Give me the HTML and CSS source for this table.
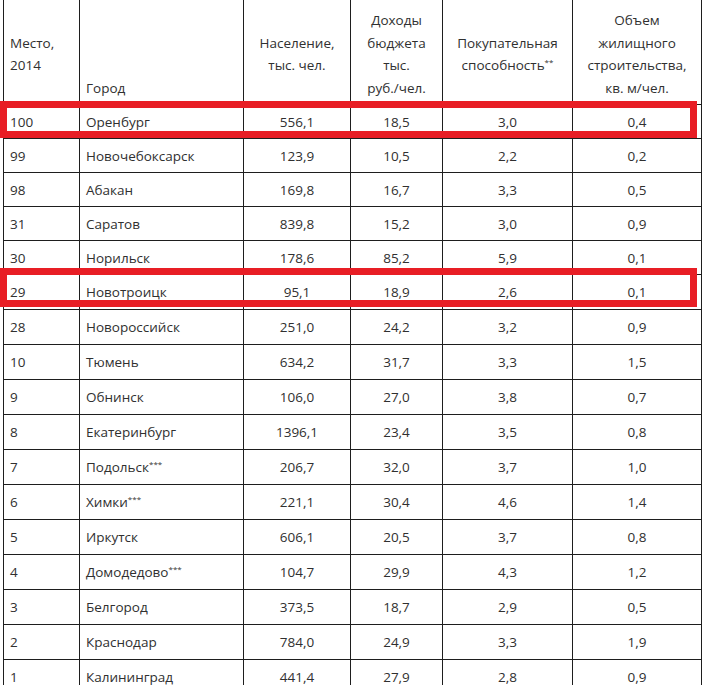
FILE: index.html
```html
<!DOCTYPE html>
<html lang="ru">
<head>
<meta charset="utf-8">
<title>Рейтинг городов</title>
<link rel="stylesheet" href="styles.css">
</head>
<body>
<div class="wrap">
  <table class="rating">
    <colgroup>
      <col class="c1"><col class="c2"><col class="c3"><col class="c4"><col class="c5"><col class="c6">
    </colgroup>
    <thead>
      <tr>
        <th class="left">Место,<br>2014</th>
        <th class="left bottom">Город</th>
        <th>Население,<br>тыс. чел.</th>
        <th>Доходы<br>бюджета<br>тыс.<br>руб./чел.</th>
        <th>Покупательная<br>способность<sup>**</sup></th>
        <th>Объем<br>жилищного<br>строительства,<br>кв. м/чел.</th>
      </tr>
    </thead>
    <tbody>
      <tr class="s"><td class="left">100</td><td class="left">Оренбург</td><td>556,1</td><td>18,5</td><td>3,0</td><td>0,4</td></tr>
      <tr class="s"><td class="left">99</td><td class="left">Новочебоксарск</td><td>123,9</td><td>10,5</td><td>2,2</td><td>0,2</td></tr>
      <tr class="s"><td class="left">98</td><td class="left">Абакан</td><td>169,8</td><td>16,7</td><td>3,3</td><td>0,5</td></tr>
      <tr class="s"><td class="left">31</td><td class="left">Саратов</td><td>839,8</td><td>15,2</td><td>3,0</td><td>0,9</td></tr>
      <tr class="s"><td class="left">30</td><td class="left">Норильск</td><td>178,6</td><td>85,2</td><td>5,9</td><td>0,1</td></tr>
      <tr><td class="left">29</td><td class="left">Новотроицк</td><td>95,1</td><td>18,9</td><td>2,6</td><td>0,1</td></tr>
      <tr><td class="left">28</td><td class="left">Новороссийск</td><td>251,0</td><td>24,2</td><td>3,2</td><td>0,9</td></tr>
      <tr><td class="left">10</td><td class="left">Тюмень</td><td>634,2</td><td>31,7</td><td>3,3</td><td>1,5</td></tr>
      <tr><td class="left">9</td><td class="left">Обнинск</td><td>106,0</td><td>27,0</td><td>3,8</td><td>0,7</td></tr>
      <tr><td class="left">8</td><td class="left">Екатеринбург</td><td>1396,1</td><td>23,4</td><td>3,5</td><td>0,8</td></tr>
      <tr><td class="left">7</td><td class="left">Подольск<sup>***</sup></td><td>206,7</td><td>32,0</td><td>3,7</td><td>1,0</td></tr>
      <tr><td class="left">6</td><td class="left">Химки<sup>***</sup></td><td>221,1</td><td>30,4</td><td>4,6</td><td>1,4</td></tr>
      <tr><td class="left">5</td><td class="left">Иркутск</td><td>606,1</td><td>20,5</td><td>3,7</td><td>0,8</td></tr>
      <tr><td class="left">4</td><td class="left">Домодедово<sup>***</sup></td><td>104,7</td><td>29,9</td><td>4,3</td><td>1,2</td></tr>
      <tr><td class="left">3</td><td class="left">Белгород</td><td>373,5</td><td>18,7</td><td>2,9</td><td>0,5</td></tr>
      <tr><td class="left">2</td><td class="left">Краснодар</td><td>784,0</td><td>24,9</td><td>3,3</td><td>1,9</td></tr>
      <tr><td class="left">1</td><td class="left">Калининград</td><td>441,4</td><td>27,9</td><td>2,8</td><td>0,9</td></tr>
    </tbody>
  </table>
  <div class="mark mark-1"></div>
  <div class="mark mark-2"></div>
</div>
</body>
</html>
```

FILE: styles.css
```css
html, body {
  margin: 0;
  padding: 0;
  background: #ffffff;
}

body {
  font-family: "Open Sans", "Noto Sans", "Liberation Sans", sans-serif;
  font-size: 13.5px;
  color: #303030;
  overflow: hidden;
}

.wrap {
  position: relative;
  width: 704px;
  height: 685px;
  overflow: hidden;
}

.rating {
  border-collapse: collapse;
  table-layout: fixed;
  width: 698px;
  margin: -1px 0 0 3px;
}

.c1 { width: 76px; }
.c2 { width: 164px; }
.c3 { width: 107px; }
.c4 { width: 92px; }
.c5 { width: 130px; }
.c6 { width: 129px; }

.rating th,
.rating td {
  border: 1px solid #1e1e1e;
  text-align: center;
  padding: 0 6px;
  font-weight: normal;
  white-space: nowrap;
}

.rating th {
  height: 105px;
  box-sizing: border-box;
  padding-top: 9px;
  padding-bottom: 5px;
  line-height: 22.5px;
  vertical-align: middle;
}

.rating th.bottom {
  vertical-align: bottom;
}

.rating .left {
  text-align: left;
}

.rating td {
  height: 35px;
  box-sizing: border-box;
  line-height: 20px;
  vertical-align: middle;
}

.rating tr.s td {
  height: 34px;
}

.rating sup {
  font-size: 8px;
  line-height: 0;
  vertical-align: 5px;
}

.mark {
  position: absolute;
  left: 0;
  width: 697px;
  box-sizing: border-box;
  border: 7px solid #e81e25;
  pointer-events: none;
}

.mark-1 {
  top: 101px;
  height: 37px;
}

.mark-2 {
  top: 268px;
  height: 39px;
}
```
